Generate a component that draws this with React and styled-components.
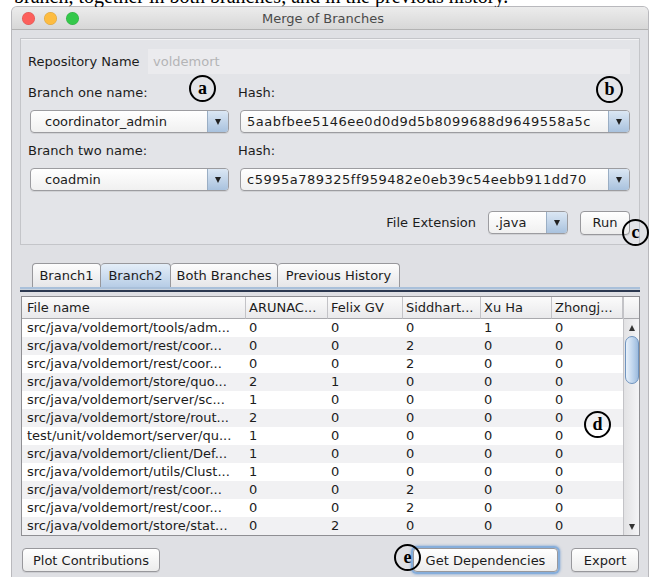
import styled, { createGlobalStyle } from "styled-components";

const GlobalStyle = createGlobalStyle`
  html, body {
    margin: 0;
    padding: 0;
    background: #fff;
    overflow: hidden;
  }
  body {
    font-family: "DejaVu Sans", "Liberation Sans", sans-serif;
    font-size: 13px;
    color: #1c1c1c;
  }
`;

const Page = styled.div`
  position: relative;
  width: 650px;
  height: 577px;
  overflow: hidden;
`;

// last line of the paragraph above the figure, cropped at the top edge
const Caption = styled.div`
  height: 7px;
  overflow: hidden;
  padding-left: 14px;

  span {
    display: block;
    margin-top: -14px;
    font: 20px/20px "Liberation Serif", serif;
    white-space: nowrap;
    color: #000;
  }
`;

const Window = styled.div`
  display: flex;
  flex-direction: column;
  margin-left: 12px;
  width: 636px;
  height: 570px;
  background: #dfe0e4;
  border-radius: 5px 5px 0 0;
  box-shadow: 0 0 0 1px #b9b9bd;
  overflow: hidden;
`;

const TitleBar = styled.div`
  display: grid;
  grid-template-columns: 1fr auto 1fr;
  align-items: center;
  height: 22px;
  padding: 0 10px;
  background: linear-gradient(#ececec, #d7d7d7);
  border-bottom: 1px solid #b3b3b3;
`;

const Lights = styled.div`
  display: flex;
  gap: 9px;
`;

const Light = styled.span`
  width: 13px;
  height: 13px;
  border-radius: 50%;
  background: ${(p) => p.$color};
  box-shadow: inset 0 0 0 0.5px rgba(0, 0, 0, 0.15);
`;

const Title = styled.div`
  color: #4a4a4a;
  font-size: 13px;
  margin-right: 14px;
`;

const Body = styled.div`
  display: flex;
  flex-direction: column;
  padding: 8px 8px 0 8px;
`;

const Panel = styled.div`
  display: flex;
  flex-direction: column;
  padding: 10px 9px 9px 7px;
  background: #e3e4e8;
  border: 1px solid #c4c5c9;
  box-shadow: inset 0 1px 0 #f2f2f4;
`;

const FormGrid = styled.div`
  display: grid;
  grid-template-columns: 210px 1fr;
  grid-template-rows: 25px 36px 23px 35px 23px;
  align-items: center;
`;

const RepoRow = styled.div`
  grid-column: 1 / 3;
  display: flex;
  align-items: center;
  height: 25px;
`;

const Label = styled.span`
  white-space: nowrap;
  width: ${(p) => (p.$w ? `${p.$w}px` : "auto")};
  flex-shrink: 0;
`;

const TextField = styled.div`
  flex: 1;
  height: 25px;
  line-height: 25px;
  padding-left: 5px;
  background: #ebebee;
  color: #b4b4b6;
`;

const Combo = styled.div`
  display: flex;
  align-items: stretch;
  height: 23px;
  margin-left: 2px;
  width: ${(p) => (p.$w ? `${p.$w}px` : "auto")};
  box-sizing: border-box;
  border: 1px solid #9c9ca0;
  border-radius: 4px;
  background: linear-gradient(#ffffff, #f0f0f0);
  box-shadow: 0 1px 0 rgba(0, 0, 0, 0.08);
  overflow: hidden;
`;

const ComboText = styled.span`
  flex: 1;
  line-height: 21px;
  padding-left: ${(p) => (p.$editable ? "6px" : "14px")};
  letter-spacing: ${(p) => (p.$mono ? "0.5px" : "0")};
  white-space: nowrap;
  overflow: hidden;
`;

const ComboArrow = styled.span`
  display: flex;
  align-items: center;
  justify-content: center;
  width: 20px;
  border-left: 1px solid #9aaec4;
  background: linear-gradient(#dbe7f4, #a9c2de);

  &::after {
    content: "";
    border-left: 3.5px solid transparent;
    border-right: 3.5px solid transparent;
    border-top: 6px solid #222;
  }
`;

const ExtRow = styled.div`
  display: flex;
  align-items: center;
  justify-content: flex-end;
  gap: 10px;
  margin-top: 19px;
  height: 25px;
`;

const Button = styled.button`
  height: 24px;
  width: ${(p) => p.$w}px;
  padding: 0;
  font: inherit;
  color: #1c1c1c;
  border: 1px solid #98989c;
  border-radius: 4px;
  background: linear-gradient(#ffffff, #ececec);
  box-shadow: ${(p) =>
    p.$focused ? "0 0 0 2px #86aedb, 0 0 2px 3px rgba(120,160,210,0.5)" : "0 1px 0 rgba(0,0,0,0.08)"};
`;

const TabStrip = styled.div`
  display: flex;
  margin-top: 18px;
  padding-left: 12px;
`;

const Tab = styled.div`
  width: ${(p) => p.$w}px;
  height: 24px;
  box-sizing: border-box;
  line-height: 23px;
  text-align: center;
  border: 1px solid #98989c;
  border-bottom: none;
  border-left-width: ${(p) => (p.$first ? "1px" : "0")};
  border-radius: 4px 4px 0 0;
  background: ${(p) =>
    p.$active ? "linear-gradient(#e4eef8, #b7cde6)" : "linear-gradient(#fdfdfd, #e6e6e8)"};
`;

const TabRule = styled.div`
  height: 5px;
  background: linear-gradient(
    #a9c0da 0,
    #a9c0da 2px,
    #c9d2dc 2px,
    #c9d2dc 3px,
    #2b3850 3px,
    #2b3850 5px
  );
`;

const TableFrame = styled.div`
  display: grid;
  grid-template-columns: 601px 16px;
  margin: 4px 0 0 1px;
  border: 1px solid #8f8f93;
  background: #fff;
`;

const Grid = styled.div`
  display: grid;
  grid-template-columns: 224px 82px 75px 78px 71px 71px;
`;

const HeadCell = styled.div`
  height: 21px;
  line-height: 21px;
  padding-left: ${(p) => (p.$first ? "5px" : "3px")};
  border-right: 1px solid #c3c3c7;
  border-bottom: 1px solid #a9a9ad;
  background: linear-gradient(#fbfbfb, #e9e9eb);
  white-space: nowrap;
  overflow: hidden;
`;

const Cell = styled.div`
  height: 18px;
  line-height: 18px;
  padding-left: ${(p) => (p.$first ? "5px" : "3px")};
  background: ${(p) => (p.$odd ? "#f1f1f3" : "#fff")};
  white-space: nowrap;
  overflow: hidden;
`;

const ScrollColumn = styled.div`
  display: flex;
  flex-direction: column;
  border-left: 1px solid #c3c3c7;
`;

const Corner = styled.div`
  height: 21px;
  border-bottom: 1px solid #a9a9ad;
  background: linear-gradient(#fbfbfb, #e9e9eb);
`;

const Track = styled.div`
  flex: 1;
  display: flex;
  flex-direction: column;
  align-items: center;
  background: linear-gradient(90deg, #e2e2e4, #f4f4f6);
`;

const Arrow = styled.span`
  margin: ${(p) => (p.$down ? "auto 0 5px" : "6px 0 5px")};
  border-left: 3.5px solid transparent;
  border-right: 3.5px solid transparent;
  ${(p) => (p.$down ? "border-top: 6px solid #333;" : "border-bottom: 6px solid #333;")}
`;

const Thumb = styled.div`
  width: 12px;
  height: 46px;
  border: 1px solid #6f94bf;
  border-radius: 7px;
  background: linear-gradient(90deg, #e9f1fa, #bcd3ec 60%, #9dbbdd);
`;

const Footer = styled.div`
  display: flex;
  align-items: center;
  margin-top: 12px;
  padding: 0 1px 0 2px;
`;

const Spacer = styled.div`
  flex: 1;
`;

// circled letters laid over the window
const Marker = styled.div`
  position: absolute;
  left: ${(p) => p.$x - 13}px;
  top: ${(p) => p.$y - 13}px;
  width: 23px;
  height: 21px;
  padding-bottom: 2px;
  border: 2px solid #000;
  border-radius: 50%;
  display: flex;
  align-items: center;
  justify-content: center;
  font: bold 18px/1 "Liberation Serif", serif;
  color: #000;
`;

const columns = ["File name", "ARUNAC...", "Felix GV", "Siddhart...", "Xu Ha", "Zhongj..."];

const rows = [
  ["src/java/voldemort/tools/adm...", 0, 0, 0, 1, 0],
  ["src/java/voldemort/rest/coor...", 0, 0, 2, 0, 0],
  ["src/java/voldemort/rest/coor...", 0, 0, 2, 0, 0],
  ["src/java/voldemort/store/quo...", 2, 1, 0, 0, 0],
  ["src/java/voldemort/server/sc...", 1, 0, 0, 0, 0],
  ["src/java/voldemort/store/rout...", 2, 0, 0, 0, 0],
  ["test/unit/voldemort/server/qu...", 1, 0, 0, 0, 0],
  ["src/java/voldemort/client/Def...", 1, 0, 0, 0, 0],
  ["src/java/voldemort/utils/Clust...", 1, 0, 0, 0, 0],
  ["src/java/voldemort/rest/coor...", 0, 0, 2, 0, 0],
  ["src/java/voldemort/rest/coor...", 0, 0, 2, 0, 0],
  ["src/java/voldemort/store/stat...", 0, 2, 0, 0, 0],
];

const tabs = [
  { label: "Branch1", w: 69 },
  { label: "Branch2", w: 70, active: true },
  { label: "Both Branches", w: 107 },
  { label: "Previous History", w: 122 },
];

export default function App() {
  return (
    <Page>
      <GlobalStyle />
      <Caption>
        <span>branch, together in both branches, and in the previous history.</span>
      </Caption>
      <Window>
        <TitleBar>
          <Lights>
            <Light $color="#fc605c" />
            <Light $color="#fdbc40" />
            <Light $color="#34c84a" />
          </Lights>
          <Title>Merge of Branches</Title>
          <span />
        </TitleBar>

        <Body>
          <Panel>
            <FormGrid>
              <RepoRow>
                <Label $w={120}>Repository Name</Label>
                <TextField>voldemort</TextField>
              </RepoRow>

              <Label>Branch one name:</Label>
              <Label>Hash:</Label>
              <Combo $w={199}>
                <ComboText>coordinator_admin</ComboText>
                <ComboArrow />
              </Combo>
              <Combo $w={390}>
                <ComboText $editable $mono>5aabfbee5146ee0d0d9d5b8099688d9649558a5c</ComboText>
                <ComboArrow />
              </Combo>

              <Label>Branch two name:</Label>
              <Label>Hash:</Label>
              <Combo $w={199}>
                <ComboText>coadmin</ComboText>
                <ComboArrow />
              </Combo>
              <Combo $w={390}>
                <ComboText $editable $mono>c5995a789325ff959482e0eb39c54eebb911dd70</ComboText>
                <ComboArrow />
              </Combo>
            </FormGrid>

            <ExtRow>
              <Label>File Extension</Label>
              <Combo $w={80}>
                <ComboText $editable>.java</ComboText>
                <ComboArrow />
              </Combo>
              <Button $w={50} style={{ marginLeft: 2 }}>Run</Button>
            </ExtRow>
          </Panel>

          <TabStrip>
            {tabs.map((t, i) => (
              <Tab key={t.label} $w={t.w} $active={t.active} $first={i === 0}>
                {t.label}
              </Tab>
            ))}
          </TabStrip>
          <TabRule />

          <TableFrame>
            <Grid>
              {columns.map((c, i) => (
                <HeadCell key={c} $first={i === 0}>
                  {c}
                </HeadCell>
              ))}
              {rows.map((r, ri) =>
                r.map((v, ci) => (
                  <Cell key={`${ri}-${ci}`} $first={ci === 0} $odd={ri % 2 === 1}>
                    {v}
                  </Cell>
                ))
              )}
            </Grid>
            <ScrollColumn>
              <Corner />
              <Track>
                <Arrow />
                <Thumb />
                <Arrow $down />
              </Track>
            </ScrollColumn>
          </TableFrame>

          <Footer>
            <Button $w={138}>Plot Contributions</Button>
            <Spacer />
            <Button $w={145} $focused>
              Get Dependencies
            </Button>
            <Button $w={68} style={{ marginLeft: 13 }}>
              Export
            </Button>
          </Footer>
        </Body>
      </Window>

      <Marker $x={202} $y={88}>a</Marker>
      <Marker $x={609} $y={89}>b</Marker>
      <Marker $x={635} $y={232}>c</Marker>
      <Marker $x={597} $y={424}>d</Marker>
      <Marker $x={407} $y={557}>e</Marker>
    </Page>
  );
}
